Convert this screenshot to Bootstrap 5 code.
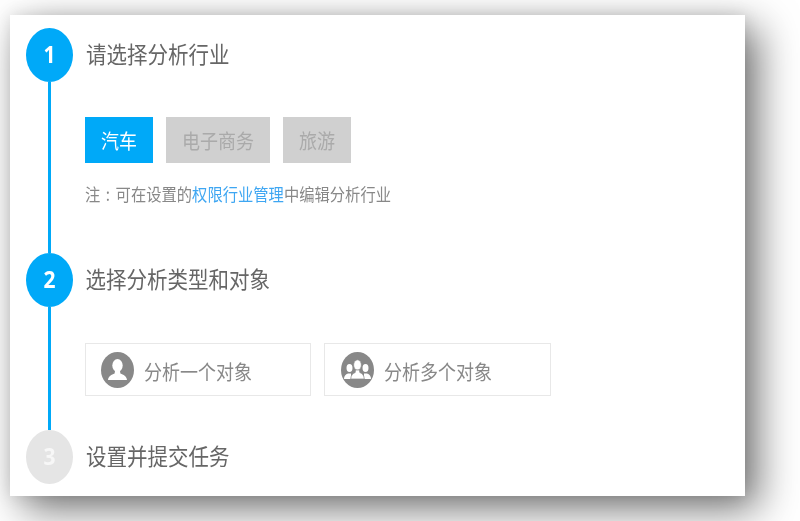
<!doctype html>
<html lang="zh-CN">
<head>
  <meta charset="utf-8">
  <meta name="viewport" content="width=device-width, initial-scale=1">
  <title>分析任务</title>
  <link href="https://cdn.jsdelivr.net/npm/bootstrap@5.3.0/dist/css/bootstrap.min.css" rel="stylesheet">
  <style>
    html, body { background: #fff; overflow: hidden; height: 521px; }
    body { padding: 15px 0 0 10px; font-family: "Noto Sans CJK SC", "Liberation Sans", sans-serif; }
    .panel-box {
      width: 735px;
      height: 481px;
      background: #fff;
      box-shadow: 13px 13px 38px rgba(0, 0, 0, .55), 0 0 16px rgba(0, 0, 0, .1);
    }
    .panel-inner { padding-top: 13px; filter: blur(.4px); }
    .tall-text { display: inline-block; transform: scaleY(1.12); }
    .step-rail { width: 47px; margin-left: 16px; margin-right: 12px; }
    .step-num {
      width: 47px;
      height: 54px;
      border-radius: 50%;
      background: #00a9f8;
      color: #fff;
      font: 700 21px/52px "Open Sans", sans-serif;
      text-align: center;
    }
    .step-num-off { background: #e5e5e5; color: #f7f7f7; }
    .step-line { width: 3px; background: #00a9f8; }
    .step-title { height: 54px; font-size: 20.5px; line-height: 51px; color: #666; padding-left: 1px; }
    .step-title-two { padding-left: .5px; }
    .pick-row { margin-top: 35px; gap: 13px; }
    .pick-btn {
      height: 46px;
      padding: 0 16px;
      border: 0;
      border-radius: 0;
      background: #d0d0d0;
      color: #aaa;
      font-size: 18px;
      line-height: 46px;
    }
    .pick-btn.pick-on { background: #00a9f8; color: #fff; }
    .pick-note { margin-top: 19px; padding-bottom: 49px; font-size: 15.3px; line-height: 22px; color: #888; }
    .pick-note a { color: #3ea6f2; text-decoration: none; }
    .note-colon { display: inline-block; width: 15.3px; text-align: center; }
    .type-row { margin-top: 36px; padding-bottom: 34px; gap: 13px; }
    .type-box {
      height: 53px;
      border: 1px solid #e8e8e8;
      color: #888;
      font-size: 18px;
      line-height: 27px;
      padding-left: 15px;
      gap: 10px;
    }
    .type-one { width: 226px; }
    .type-many { width: 227px; }
    .type-many .type-ico { margin-left: 1px; }
    .type-ico { width: 33px; height: 36px; }
    .type-text { margin-top: 4px; }
  </style>
</head>
<body>
  <div class="panel-box">
    <div class="panel-inner">
      <div class="d-flex">
        <div class="step-rail d-flex flex-column align-items-center">
          <div class="step-num"><span class="tall-text">1</span></div>
          <div class="step-line flex-grow-1"></div>
        </div>
        <div>
          <div class="step-title"><span class="tall-text">请选择分析行业</span></div>
          <div class="pick-row d-flex">
            <button type="button" class="btn pick-btn pick-on"><span class="tall-text">汽车</span></button>
            <button type="button" class="btn pick-btn"><span class="tall-text">电子商务</span></button>
            <button type="button" class="btn pick-btn"><span class="tall-text">旅游</span></button>
          </div>
          <div class="pick-note"><span class="tall-text">注<span class="note-colon">:</span>可在设置的<a href="#">权限行业管理</a>中编辑分析行业</span></div>
        </div>
      </div>

      <div class="d-flex">
        <div class="step-rail d-flex flex-column align-items-center">
          <div class="step-num"><span class="tall-text">2</span></div>
          <div class="step-line flex-grow-1"></div>
        </div>
        <div>
          <div class="step-title step-title-two"><span class="tall-text">选择分析类型和对象</span></div>
          <div class="type-row d-flex">
            <div class="type-box type-one d-flex align-items-center">
              <svg class="type-ico" viewBox="0 0 33 36">
                <ellipse cx="16.5" cy="18" rx="16.5" ry="18" fill="#888"/>
                <ellipse cx="16.5" cy="13.5" rx="5.2" ry="6.5" fill="#fff"/>
                <path d="M14 19l-.4 2.6C10.500 23 7.500 24 7 28h19c-.5-4-3.500-5-6.600-6.400L19 19z" fill="#fff"/>
              </svg>
              <span class="type-text tall-text">分析一个对象</span>
            </div>
            <div class="type-box type-many d-flex align-items-center">
              <svg class="type-ico" viewBox="0 0 33 36">
                <ellipse cx="16.5" cy="18" rx="16.5" ry="18" fill="#888"/>
                <ellipse cx="8.500" cy="16" rx="3" ry="4" fill="#fff"/>
                <path d="M3 27c0-3 1.500-4.500 4-5.500h3V27z" fill="#fff"/>
                <ellipse cx="24.500" cy="16" rx="3" ry="4" fill="#fff"/>
                <path d="M30 27c0-3-1.500-4.500-4-5.500h-3V27z" fill="#fff"/>
                <ellipse cx="16.500" cy="13" rx="3.900" ry="5.200" fill="#fff" stroke="#888" stroke-width=".7"/>
                <path d="M14.500 18l-.3 2.500c-2.600 1-4.200 2.500-4.500 6.500h13.600c-.3-4-1.900-5.500-4.500-6.500l-.3-2.500z" fill="#fff" stroke="#888" stroke-width=".7"/>
              </svg>
              <span class="type-text tall-text">分析多个对象</span>
            </div>
          </div>
        </div>
      </div>

      <div class="d-flex">
        <div class="step-rail d-flex flex-column align-items-center">
          <div class="step-num step-num-off"><span class="tall-text">3</span></div>
        </div>
        <div class="step-title"><span class="tall-text">设置并提交任务</span></div>
      </div>
    </div>
  </div>

  <script src="https://cdn.jsdelivr.net/npm/bootstrap@5.3.0/dist/js/bootstrap.bundle.min.js"></script>
</body>
</html>
